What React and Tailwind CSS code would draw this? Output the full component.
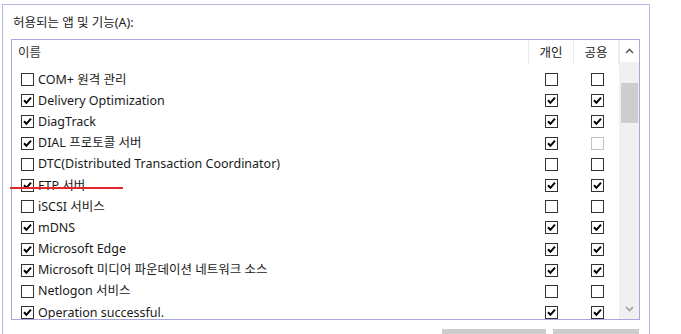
import React from 'react';

const rows = [
  { name: 'COM+ 원격 관리', on: false, priv: 'off', pub: 'off' },
  { name: 'Delivery Optimization', on: true, priv: 'on', pub: 'on' },
  { name: 'DiagTrack', on: true, priv: 'on', pub: 'on' },
  { name: 'DIAL 프로토콜 서버', on: true, priv: 'on', pub: 'disabled' },
  { name: 'DTC(Distributed Transaction Coordinator)', on: false, priv: 'off', pub: 'off' },
  { name: 'FTP 서버', on: true, priv: 'on', pub: 'on' },
  { name: 'iSCSI 서비스', on: false, priv: 'off', pub: 'off' },
  { name: 'mDNS', on: true, priv: 'on', pub: 'on' },
  { name: 'Microsoft Edge', on: true, priv: 'on', pub: 'on' },
  { name: 'Microsoft 미디어 파운데이션 네트워크 소스', on: true, priv: 'on', pub: 'on' },
  { name: 'Netlogon 서비스', on: false, priv: 'off', pub: 'off' },
  { name: 'Operation successful.', on: true, priv: 'on', pub: 'on' },
];

function Box({ state }) {
  const checked = state === true || state === 'on';
  const disabled = state === 'disabled';
  return (
    <svg width="13" height="13" viewBox="0 0 13 13" className="shrink-0 block">
      <rect x="0.5" y="0.5" width="12" height="12" fill="#fff" stroke={disabled ? '#c2c2c2' : '#333'} />
      {checked && (
        <path d="M3 6.3 L5.4 8.8 L10 3.6" fill="none" stroke="#000" strokeWidth="2" />
      )}
    </svg>
  );
}

export default function App() {
  return (
    <div
      className="w-[681px] h-[334px] bg-white overflow-hidden relative text-[12.5px] text-[#1a1a1a]"
      style={{ fontFamily: '"Noto Sans", "Noto Sans CJK KR", sans-serif' }}
    >
      <div className="ml-[2px] mt-[4px] w-[648px] h-[340px] border border-[#b8b8e6] pl-[8px]">
        <div className="h-[34px] pl-[2px] pt-[10px] leading-[16px]">허용되는 앱 및 기능(A):</div>

        <div className="w-[629px] h-[281px] border border-[#a7a7de] flex overflow-hidden">
          <div className="flex-1 flex flex-col">
            <div className="flex h-[25px] shrink-0">
              <div className="w-[516px] pl-[6px] pt-[4px] text-[#333]">이름</div>
              <div className="w-[45px] h-full pt-[4px] border-l border-[#ececec] flex justify-center">개인</div>
              <div className="w-[46px] h-full pt-[4px] border-l border-r border-[#ececec] flex justify-center">공용</div>
            </div>
            <div className="h-[4px] shrink-0" />
            {rows.map((r) => (
              <div key={r.name} className="flex h-[21.2px] shrink-0 items-center">
                <div className="w-[516px] pl-[9px] flex items-center gap-[4px] whitespace-nowrap">
                  <Box state={r.on} />
                  <span className="leading-[16px]">{r.name}</span>
                </div>
                <div className="w-[45px] flex justify-center pl-[1px]">
                  <Box state={r.priv} />
                </div>
                <div className="w-[46px] flex justify-center pl-[2px]">
                  <Box state={r.pub} />
                </div>
              </div>
            ))}
          </div>

          <div className="w-[20px] h-full bg-[#f0f0f0] flex flex-col items-center">
            <div className="h-[22px] w-full bg-white flex items-center justify-center border-l border-[#ececec]">
              <svg width="9" height="6" viewBox="0 0 9 6">
                <path d="M1 5 L4.5 1.5 L8 5" fill="none" stroke="#606060" strokeWidth="1.6" />
              </svg>
            </div>
            <div className="h-[21px]" />
            <div className="w-[17px] h-[40px] bg-[#cdcdcd]" />
            <div className="flex-1" />
            <div className="h-[20px] w-full flex items-center justify-center">
              <svg width="9" height="6" viewBox="0 0 9 6">
                <path d="M1 1 L4.5 4.5 L8 1" fill="none" stroke="#a0a0a0" strokeWidth="1.6" />
              </svg>
            </div>
          </div>
        </div>

        <div className="w-[629px] flex justify-end gap-[7px] mt-[9px] pr-[1px]">
          <div className="w-[104px] h-[24px] bg-[#cccccc]" />
          <div className="w-[86px] h-[24px] bg-[#cccccc]" />
        </div>
      </div>

      <div className="absolute left-[10px] top-[187px] w-[113px] h-[2px] bg-[#e3262b]" />
    </div>
  );
}
